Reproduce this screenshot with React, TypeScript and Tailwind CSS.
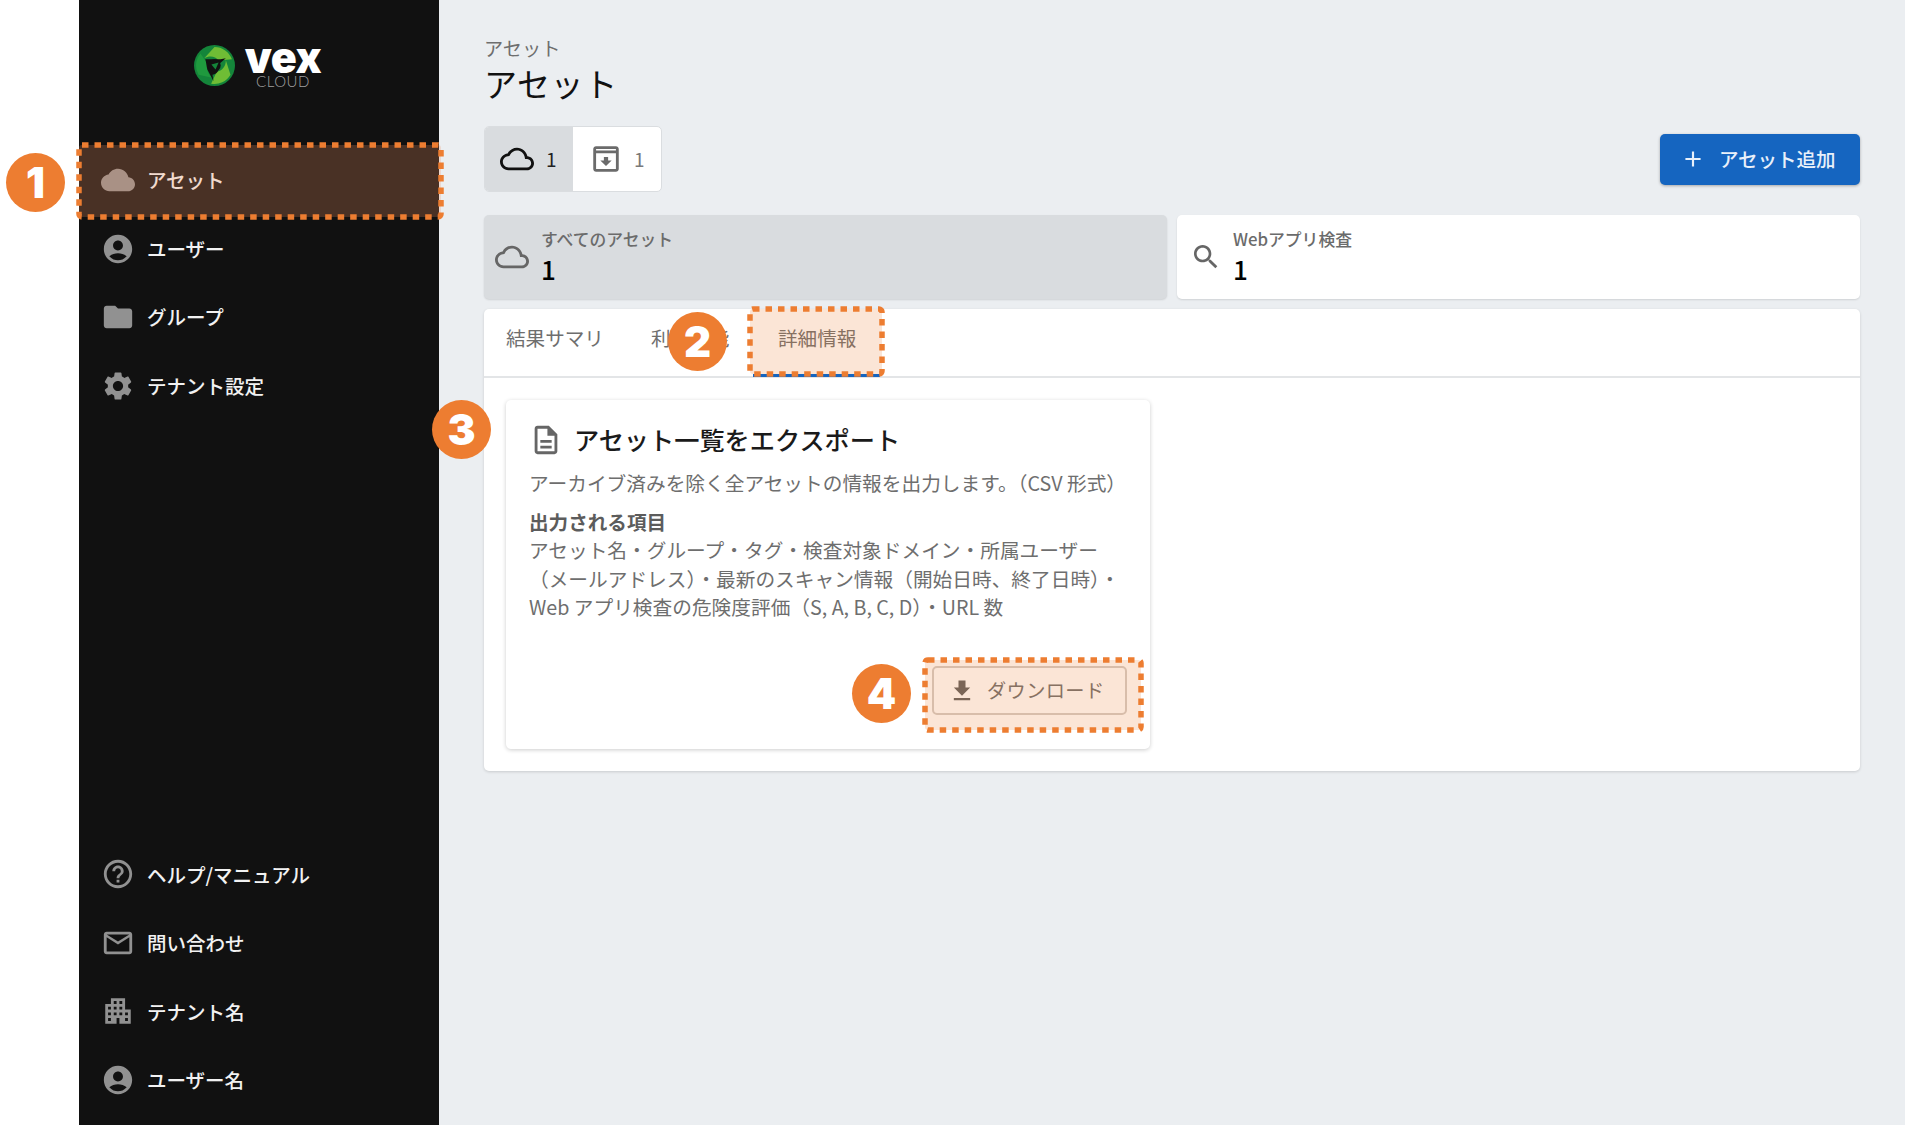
import React from "react";

const P = {
  cloud: "M19.35 10.04C18.67 6.59 15.64 4 12 4 9.11 4 6.6 5.64 5.35 8.04 2.34 8.36 0 10.91 0 14c0 3.31 2.69 6 6 6h13c2.76 0 5-2.24 5-5 0-2.64-2.05-4.78-4.65-4.96z",
  cloudO: "M19.35 10.04C18.67 6.59 15.64 4 12 4 9.11 4 6.61 5.64 5.36 8.04 2.35 8.36 0 10.9 0 14c0 3.31 2.69 6 6 6h13c2.76 0 5-2.24 5-5 0-2.64-2.05-4.78-4.65-4.96zM19 18H6c-2.21 0-4-1.79-4-4 0-2.05 1.53-3.76 3.56-3.97l1.07-.11.5-.95C8.08 7.14 9.94 6 12 6c2.62 0 4.88 1.86 5.39 4.43l.3 1.5 1.53.11c1.56.1 2.78 1.41 2.78 2.96 0 1.65-1.35 3-3 3z",
  user: "M12 2C6.48 2 2 6.48 2 12s4.48 10 10 10 10-4.48 10-10S17.52 2 12 2zm0 4c1.93 0 3.5 1.57 3.5 3.5S13.93 13 12 13s-3.5-1.57-3.5-3.5S10.07 6 12 6zm0 14c-2.03 0-4.43-.82-6.14-2.88C7.55 15.8 9.68 15 12 15s4.45.8 6.14 2.12C16.43 19.18 14.03 20 12 20z",
  folder: "M10 4H4c-1.1 0-1.99.9-1.99 2L2 18c0 1.1.9 2 2 2h16c1.1 0 2-.9 2-2V8c0-1.1-.9-2-2-2h-8l-2-2z",
  gear: "M19.14 12.94c.04-.3.06-.61.06-.94 0-.32-.02-.64-.07-.94l2.03-1.58c.18-.14.23-.41.12-.61l-1.92-3.32c-.12-.22-.37-.29-.59-.22l-2.39.96c-.5-.38-1.03-.7-1.62-.94l-.36-2.54c-.04-.24-.24-.41-.48-.41h-3.84c-.24 0-.43.17-.47.41l-.36 2.54c-.59.24-1.13.57-1.62.94l-2.39-.96c-.22-.08-.47 0-.59.22L2.74 8.87c-.12.21-.08.47.12.61l2.03 1.58c-.05.3-.09.63-.09.94s.02.64.07.94l-2.03 1.58c-.18.14-.23.41-.12.61l1.92 3.32c.12.22.37.29.59.22l2.39-.96c.5.38 1.03.7 1.62.94l.36 2.54c.05.24.24.41.48.41h3.84c.24 0 .44-.17.47-.41l.36-2.54c.59-.24 1.13-.56 1.62-.94l2.39.96c.22.08.47 0 .59-.22l1.92-3.32c.12-.22.07-.47-.12-.61l-2.01-1.58zM12 15.6c-1.98 0-3.6-1.62-3.6-3.6s1.62-3.6 3.6-3.6 3.6 1.62 3.6 3.6-1.62 3.6-3.6 3.6z",
  help: "M11 18h2v-2h-2v2zm1-16C6.48 2 2 6.48 2 12s4.48 10 10 10 10-4.48 10-10S17.52 2 12 2zm0 18c-4.41 0-8-3.59-8-8s3.59-8 8-8 8 3.59 8 8-3.59 8-8 8zm0-14c-2.21 0-4 1.79-4 4h2c0-1.1.9-2 2-2s2 .9 2 2c0 2-3 1.75-3 5h2c0-2.25 3-2.5 3-5 0-2.21-1.79-4-4-4z",
  mail: "M20 4H4c-1.1 0-1.99.9-1.99 2L2 18c0 1.1.9 2 2 2h16c1.1 0 2-.9 2-2V6c0-1.1-.9-2-2-2zm0 14H4V8l8 5 8-5v10zm-8-7L4 6h16l-8 5z",
  building: "M17 11V3H7v4H3v14h8v-4h2v4h8V11h-4zM7 19H5v-2h2v2zm0-4H5v-2h2v2zm0-4H5V9h2v2zm4 4H9v-2h2v2zm0-4H9V9h2v2zm0-4H9V5h2v2zm4 8h-2v-2h2v2zm0-4h-2V9h2v2zm0-4h-2V5h2v2zm4 12h-2v-2h2v2zm0-4h-2v-2h2v2z",
  search: "M15.5 14h-.79l-.28-.27C15.41 12.59 16 11.11 16 9.5 16 5.91 13.09 3 9.5 3S3 5.91 3 9.5 5.91 16 9.5 16c1.61 0 3.09-.59 4.23-1.57l.27.28v.79l5 4.99L20.49 19l-4.99-5zm-6 0C7.01 14 5 11.99 5 9.5S7.01 5 9.5 5 14 7.01 14 9.5 11.99 14 9.5 14z",
  download: "M19 9h-4V3H9v6H5l7 7 7-7zM5 18v2h14v-2H5z",
  doc: "M8 16h8v2H8zm0-4h8v2H8zm6-10H6c-1.1 0-2 .9-2 2v16c0 1.1.89 2 1.99 2H18c1.1 0 2-.9 2-2V8l-6-6zm4 18H6V4h7v5h5v11z",
  plus: "M19 13h-6v6h-2v-6H5v-2h6V5h2v6h6v2z",
  archive: "M19 3H5c-1.1 0-2 .9-2 2v14c0 1.1.9 2 2 2h14c1.1 0 2-.9 2-2V5c0-1.1-.9-2-2-2zm0 16H5V8h14v11zM5 6V5h14v1H5zm5.5 4.5h3V13H16l-4 4-4-4h2.5v-2.5z",
};

function Icon({ d, className }: { d: string; className: string }) {
  return (
    <svg viewBox="0 0 24 24" fill="currentColor" className={className}>
      <path d={d} />
    </svg>
  );
}

function NavItem({ d, label }: { d: string; label: string }) {
  return (
    <div className="flex items-center h-[68.5px] pl-[22px] gap-[12px]">
      <Icon d={d} className="w-[34px] h-[34px] text-[#919191] shrink-0" />
      <span className="text-[19.5px] font-medium text-[#f2f2f2] leading-none">{label}</span>
    </div>
  );
}

function Logo() {
  const blade = "M20 2 A18 18 0 0 1 37 14 L24 15 C21 11 15 10 10 13 Z";
  return (
    <div className="flex items-start justify-center pr-[4px] gap-[11px]">
      <svg viewBox="0 0 40 40" className="w-[41px] h-[41px]">
        <circle cx="20" cy="20" r="20" fill="#14853a" />
        <g fill="#6fbd35">
          <path d={blade} />
          <path d={blade} transform="rotate(120 20 20)" />
          <path d={blade} transform="rotate(240 20 20)" fill="#1f9a3e" />
        </g>
        <path d="M11 14 L26 14 L31 13 L24 19 C26 25 21 29 18 29 L19 35 L13 24 C12 20 12 17 11 14 Z" fill="#111111" />
        <circle cx="20" cy="20" r="6" fill="#111111" />
        <path d="M17 19 L24 17 L21 24 Z" fill="#14853a" />
      </svg>
      <div className="flex flex-col items-center w-[75px] -mt-[6px]">
        <span className="font-['Inter',sans-serif] font-black text-[43px] leading-[36px] tracking-[-0.5px] text-white">vex</span>
        <span className="font-['Lato',sans-serif] font-light text-[15px] leading-[15px] tracking-[0.5px] text-[#a0a0a0] -mt-[1px]">CLOUD</span>
      </div>
    </div>
  );
}

function Mark({ n, className }: { n: string; className: string }) {
  return (
    <div className={"absolute w-[59px] h-[59px] rounded-full bg-[#ed7d31] flex items-center justify-center font-['Inter',sans-serif] font-black text-[42px] text-white leading-none " + className}>
      {n}
    </div>
  );
}

function Dash({ w, h, fill, className }: { w: number; h: number; fill: string; className: string }) {
  return (
    <svg width={w + 8} height={h + 8} className={"absolute " + className}>
      <rect x="4" y="4" width={w} height={h} rx="3" fill={fill} stroke="#ed7d31" strokeWidth="5.5" strokeDasharray="6.5 6" />
    </svg>
  );
}

function Stat({ d, label, active, iconClass }: { d: string; label: string; active?: boolean; iconClass: string }) {
  return (
    <div className={"flex-1 h-[84px] rounded-[5px] flex items-center shadow-[0_1px_2px_rgba(0,0,0,0.12)] " + (active ? "bg-[#d9dcdf]" : "bg-white")}>
      <Icon d={d} className={"shrink-0 text-[#666666] " + iconClass} />
      <div className="flex flex-col -mt-[1px]">
        <span className="text-[16.8px] leading-[24px] font-medium text-[#6b6b6b]">{label}</span>
        <span className="text-[26px] leading-[36px] font-medium text-black">1</span>
      </div>
    </div>
  );
}

export default function App() {
  return (
    <div className="relative w-[1905px] h-[1125px] overflow-hidden bg-white flex font-['Noto_Sans_CJK_JP','Noto_Sans',sans-serif]">
      <div className="w-[79px] shrink-0 bg-white" />
      <aside className="w-[360px] shrink-0 bg-[#111111] flex flex-col pb-[11px]">
        <div className="h-[145.75px] pt-[45px]">
          <Logo />
        </div>
        <NavItem d={P.cloud} label="アセット" />
        <NavItem d={P.user} label="ユーザー" />
        <NavItem d={P.folder} label="グループ" />
        <NavItem d={P.gear} label="テナント設定" />
        <div className="flex-1" />
        <NavItem d={P.help} label="ヘルプ/マニュアル" />
        <NavItem d={P.mail} label="問い合わせ" />
        <NavItem d={P.building} label="テナント名" />
        <NavItem d={P.user} label="ユーザー名" />
      </aside>

      <main className="flex-1 bg-[#ebeef1] px-[45px] pt-[35px] flex flex-col">
        <div className="text-[19.2px] leading-[26px] text-[#6e6e6e]">アセット</div>
        <h1 className="text-[33px] leading-[44px] text-[#111111] font-normal tracking-[0.6px]">アセット</h1>

        <div className="mt-[21px] flex items-center justify-between">
          <div className="flex h-[66px] rounded-[5px] overflow-hidden border border-[#dadde0] bg-white">
            <div className="w-[88px] bg-[#d9dcdf] flex items-center pl-[15px] gap-[12px]">
              <Icon d={P.cloudO} className="w-[34px] h-[34px] text-[#111111]" />
              <span className="text-[19px] text-[#222222]">1</span>
            </div>
            <div className="w-[88px] flex items-center pl-[16px] gap-[11px]">
              <Icon d={P.archive} className="w-[34px] h-[34px] text-[#6b6b6b]" />
              <span className="text-[19px] text-[#7a7a7a]">1</span>
            </div>
          </div>
          <div className="w-[200px] h-[51px] rounded-[5px] bg-[#1565c0] shadow-[0_1px_3px_rgba(0,0,0,0.3)] flex items-center pl-[20px] gap-[13px]">
            <Icon d={P.plus} className="w-[26px] h-[26px] text-[#e8f0fa]" />
            <span className="text-[19.5px] font-medium text-[#e8f0fa] leading-none">アセット追加</span>
          </div>
        </div>

        <div className="mt-[23px] flex gap-[10px]">
          <Stat d={P.cloudO} label="すべてのアセット" active iconClass="w-[34px] h-[34px] ml-[11px] mr-[12px]" />
          <Stat d={P.search} label="Webアプリ検査" iconClass="w-[32px] h-[32px] ml-[13px] mr-[11px]" />
        </div>

        <section className="mt-[10px] h-[462px] bg-white rounded-[5px] shadow-[0_1px_3px_rgba(0,0,0,0.15)] flex flex-col">
          <div className="h-[69px] shrink-0 border-b-2 border-[#e3e5e7] flex items-center pl-[22px] pb-[10px] text-[19.6px] text-[#6e6e6e]">
            <span className="w-[145px]">結果サマリ</span>
            <span className="w-[127px]">利用機能</span>
            <span>詳細情報</span>
          </div>
          <div className="p-[22px] flex-1 flex">
            <div className="w-[644px] rounded-[5px] bg-white shadow-[0_1px_4px_rgba(0,0,0,0.2)] flex flex-col pl-[23px] pr-[23px] pt-[23px] pb-[34px]">
              <div className="flex items-center h-[34px]">
                <Icon d={P.doc} className="w-[34px] h-[34px] text-[#666666] shrink-0" />
                <span className="ml-[11px] text-[25.2px] font-medium text-[#1a1a1a] leading-none whitespace-nowrap">アセット一覧をエクスポート</span>
              </div>
              <p className="mt-[12px] text-[19.7px] leading-[28px] text-[#6e6e6e] whitespace-nowrap">アーカイブ済みを除く全アセットの情報を出力します。（CSV 形式）</p>
              <p className="mt-[11px] text-[19.6px] leading-[28px] font-bold text-[#5c5c5c]">出力される項目</p>
              <p className="text-[19.7px] leading-[28.5px] text-[#6e6e6e] whitespace-nowrap">
                アセット名・グループ・タグ・検査対象ドメイン・所属ユーザー
                <br />
                （メールアドレス）・最新のスキャン情報（開始日時、終了日時）・
                <br />
                Web アプリ検査の危険度評価（S, A, B, C, D）・URL 数
              </p>
              <div className="mt-auto flex justify-end">
                <div className="w-[195px] h-[49px] rounded-[5px] border-2 border-[#d4cdc8] flex items-center pl-[14px] gap-[11px]">
                  <Icon d={P.download} className="w-[28px] h-[28px] text-[#5f5f5f]" />
                  <span className="text-[19.2px] text-[#6e6e6e] tracking-[0.4px] leading-none">ダウンロード</span>
                </div>
              </div>
            </div>
          </div>
        </section>
      </main>

      {/* annotations */}
      <div className="absolute left-[753px] top-[374px] w-[127px] h-[3px] bg-[#1565c0]" />
      <Dash w={362} h={72} fill="rgba(245,149,101,0.25)" className="left-[75px] top-[141px]" />
      <Dash w={132} h={65} fill="rgba(237,125,49,0.2)" className="left-[746px] top-[305px]" />
      <Dash w={216} h={70} fill="rgba(237,125,49,0.2)" className="left-[921px] top-[656px]" />
      <Mark n="1" className="left-[6px] top-[153px]" />
      <Mark n="2" className="left-[668px] top-[312px]" />
      <Mark n="3" className="left-[432px] top-[400px]" />
      <Mark n="4" className="left-[852px] top-[664px]" />
    </div>
  );
}
